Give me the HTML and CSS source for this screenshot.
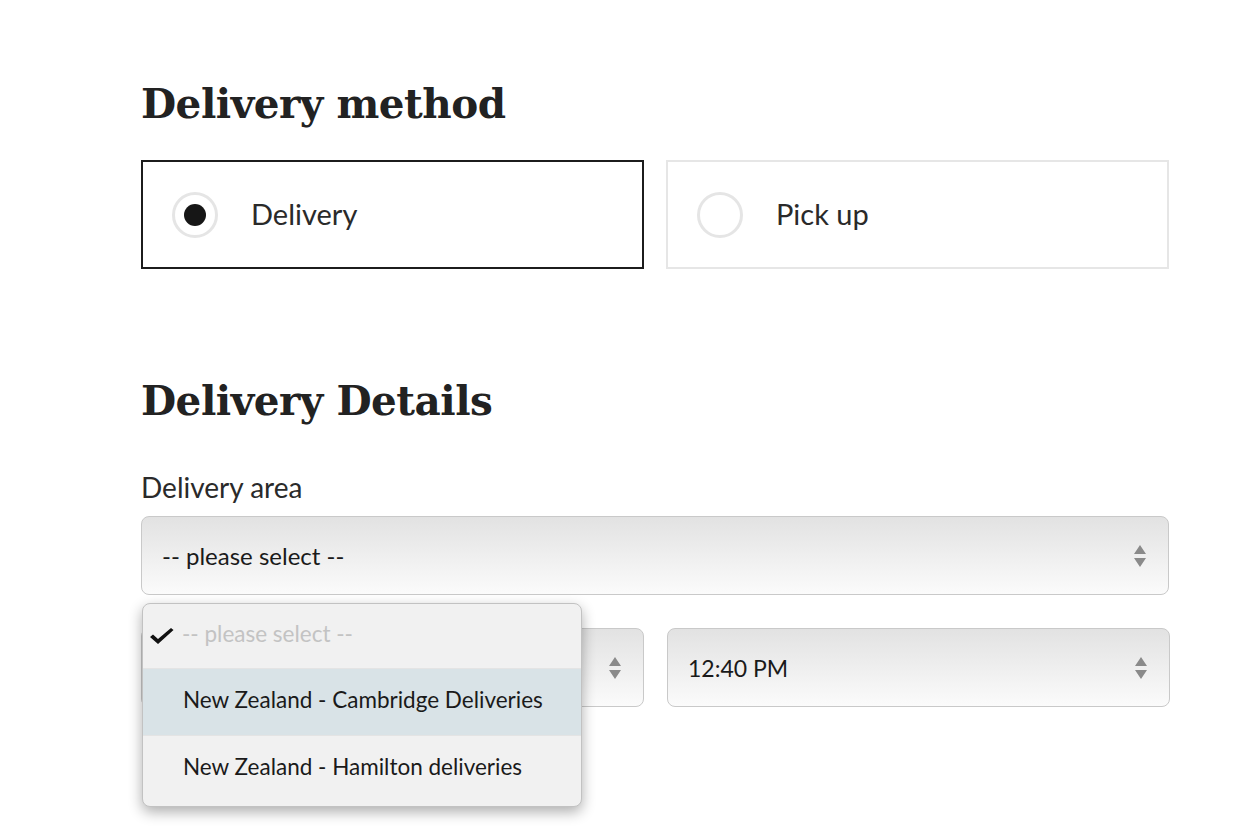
FILE: index.html
```html
<!DOCTYPE html>
<html lang="en">
<head>
<meta charset="utf-8">
<title>Delivery</title>
<link rel="stylesheet" href="styles.css">
</head>
<body>
<main class="page">
  <section class="section">
    <h2 class="heading">Delivery method</h2>
    <div class="methods">
      <label class="method method-active">
        <span class="radio radio-on"></span>
        <span class="method-text">Delivery</span>
      </label>
      <label class="method">
        <span class="radio"></span>
        <span class="method-text">Pick up</span>
      </label>
    </div>
  </section>

  <section class="section details">
    <h2 class="heading">Delivery Details</h2>
    <div class="field">
      <div class="field-label">Delivery area</div>
      <div class="select">
        <span class="select-value">-- please select --</span>
        <svg class="arrows" width="14" height="22" viewBox="0 0 14 22"><path d="M7 0 L13 9 L1 9 Z M1 13 L13 13 L7 22 Z" fill="#8a8a8a"/></svg>
      </div>
    </div>
    <div class="row">
      <div class="select">
        <span class="select-value"></span>
        <svg class="arrows" width="14" height="22" viewBox="0 0 14 22"><path d="M7 0 L13 9 L1 9 Z M1 13 L13 13 L7 22 Z" fill="#8a8a8a"/></svg>
      </div>
      <div class="select">
        <span class="select-value">12:40 PM</span>
        <svg class="arrows" width="14" height="22" viewBox="0 0 14 22"><path d="M7 0 L13 9 L1 9 Z M1 13 L13 13 L7 22 Z" fill="#8a8a8a"/></svg>
      </div>
    </div>

    <ul class="menu">
      <li class="menu-item menu-placeholder">
        <svg class="check" width="26" height="18" viewBox="0 0 26 18"><path d="M1 10 L4 7.5 L9 12 L22 1 L24.5 3 L9 17 Z" fill="#111"/></svg>
        -- please select --
      </li>
      <li class="menu-item menu-hover">New Zealand - Cambridge Deliveries</li>
      <li class="menu-item">New Zealand - Hamilton deliveries</li>
    </ul>
  </section>
</main>
</body>
</html>
```

FILE: styles.css
```css
* { box-sizing: border-box; }

html, body {
  margin: 0;
  padding: 0;
  background: #ffffff;
}

body {
  font-family: Lato, "Noto Sans", sans-serif;
  color: #222222;
  height: 838px;
  overflow: hidden;
}

.page {
  width: 1028px;
  margin-left: 141px;
  padding-top: 76px;
}

.heading {
  font-family: "DejaVu Serif", "Liberation Serif", serif;
  font-weight: 700;
  font-size: 40.5px;
  line-height: 56px;
  letter-spacing: -0.5px;
  color: #222222;
  margin: 0 0 28px 0;
}

.methods {
  display: grid;
  grid-template-columns: 503px 503px;
  column-gap: 22px;
}

.method {
  height: 109px;
  border: 2px solid #e6e6e6;
  display: flex;
  align-items: center;
  padding-left: 29px;
}

.method-active {
  border-color: #1c1c1c;
}

.radio {
  width: 46px;
  height: 46px;
  border-radius: 50%;
  border: 3.5px solid #e5e5e5;
  display: flex;
  align-items: center;
  justify-content: center;
  flex: none;
}

.radio-on::after {
  content: "";
  width: 22px;
  height: 22px;
  border-radius: 50%;
  background: #161616;
}

.method-text {
  margin-left: 33px;
  font-size: 29px;
  color: #2a2a2a;
  padding-bottom: 3px;
}

.details {
  position: relative;
  padding-top: 104px;
}

.details .heading {
  margin-bottom: 41px;
}

.field-label {
  font-size: 28px;
  color: #2a2a2a;
  line-height: 34px;
  margin-bottom: 12px;
}

.select {
  height: 79px;
  border: 1.5px solid #c9c9c9;
  border-radius: 8px;
  background: linear-gradient(#e2e2e2, #fbfbfb);
  display: flex;
  align-items: center;
  justify-content: space-between;
  padding: 0 21px 0 20px;
}

.select-value {
  font-size: 24px;
  color: #1a1a1a;
}

.row .select-value {
  font-size: 23px;
}

.arrows { flex: none; }

.row {
  margin-top: 33px;
  display: grid;
  grid-template-columns: 503px 503px;
  column-gap: 23px;
}

.menu {
  position: absolute;
  left: 1px;
  top: 334px;
  width: 440px;
  margin: 0;
  padding: 0 0 5px 0;
  list-style: none;
  background: #f1f1f1;
  border: 1px solid #c2c2c2;
  border-radius: 8px;
  box-shadow: 0 5px 14px rgba(0, 0, 0, 0.32);
  overflow: hidden;
}

.menu-item {
  height: 66px;
  display: flex;
  align-items: center;
  padding-left: 40px;
  padding-bottom: 5px;
  font-size: 22.5px;
  color: #1a1a1a;
  border-top: 1px solid #e4e4e4;
}

.menu-item:first-child { border-top: none; height: 64px; }

.menu-placeholder {
  color: #c3c3c3;
  position: relative;
  padding-left: 39px;
  align-items: flex-start;
  padding-top: 16px;
}

.check {
  position: absolute;
  left: 6px;
  top: 23px;
}

.menu-hover {
  background: #d9e3e7;
  height: 67px;
}
```
